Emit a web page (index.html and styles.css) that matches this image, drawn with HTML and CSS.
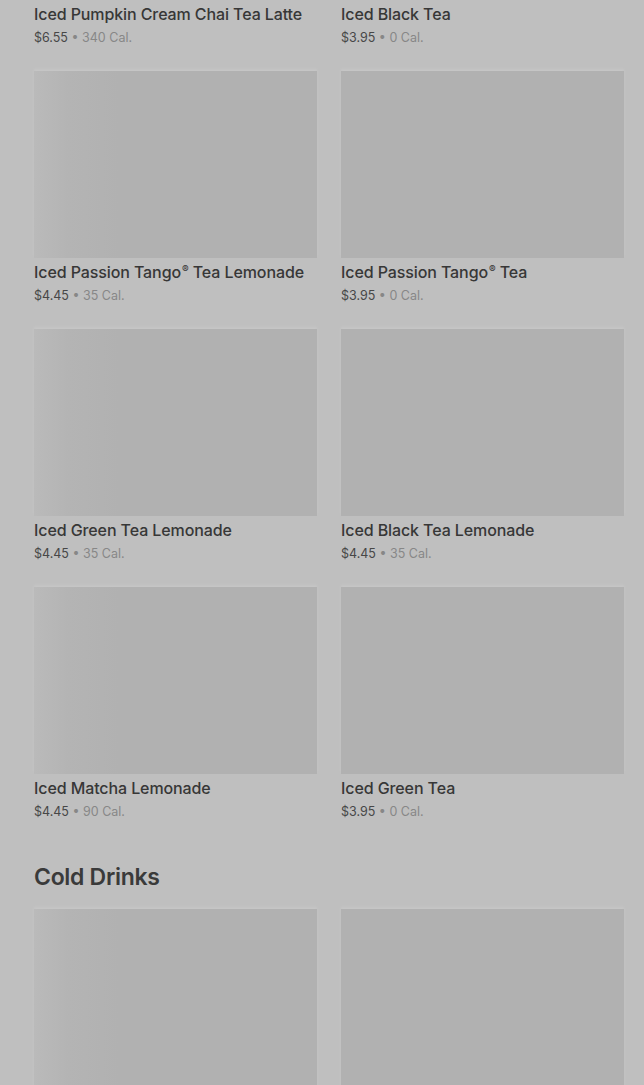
FILE: index.html
```html
<!DOCTYPE html>
<html lang="en">
<head>
    <meta charset="UTF-8">
    <meta name="viewport" content="width=device-width, initial-scale=1.0">
    <title>Menu - Iced Teas</title>
    <link rel="stylesheet" href="styles.css">
</head>
<body>
    <div class="menu">
        <!-- Iced Teas (scrolled, first row partly hidden) -->
        <section class="category scrolled">
            <div class="product-grid">
                <div class="product">
                    <div class="product-img"></div>
                    <h4 class="product-name">Iced Pumpkin Cream Chai Tea Latte</h4>
                    <p class="product-meta">$6.55 <span class="cal">• 340 Cal.</span></p>
                </div>
                <div class="product">
                    <div class="product-img"></div>
                    <h4 class="product-name">Iced Black Tea</h4>
                    <p class="product-meta">$3.95 <span class="cal">• 0 Cal.</span></p>
                </div>
                <div class="product">
                    <div class="product-img"></div>
                    <h4 class="product-name">Iced Passion Tango<span class="reg">®</span> Tea Lemonade</h4>
                    <p class="product-meta">$4.45 <span class="cal">• 35 Cal.</span></p>
                </div>
                <div class="product">
                    <div class="product-img"></div>
                    <h4 class="product-name">Iced Passion Tango<span class="reg">®</span> Tea</h4>
                    <p class="product-meta">$3.95 <span class="cal">• 0 Cal.</span></p>
                </div>
                <div class="product">
                    <div class="product-img"></div>
                    <h4 class="product-name">Iced Green Tea Lemonade</h4>
                    <p class="product-meta">$4.45 <span class="cal">• 35 Cal.</span></p>
                </div>
                <div class="product">
                    <div class="product-img"></div>
                    <h4 class="product-name">Iced Black Tea Lemonade</h4>
                    <p class="product-meta">$4.45 <span class="cal">• 35 Cal.</span></p>
                </div>
                <div class="product">
                    <div class="product-img"></div>
                    <h4 class="product-name">Iced Matcha Lemonade</h4>
                    <p class="product-meta">$4.45 <span class="cal">• 90 Cal.</span></p>
                </div>
                <div class="product">
                    <div class="product-img"></div>
                    <h4 class="product-name">Iced Green Tea</h4>
                    <p class="product-meta">$3.95 <span class="cal">• 0 Cal.</span></p>
                </div>
            </div>
        </section>

        <section class="category">
            <h2 class="category-title">Cold Drinks</h2>
            <div class="product-grid">
                <div class="product">
                    <div class="product-img"></div>
                </div>
                <div class="product">
                    <div class="product-img"></div>
                </div>
            </div>
        </section>
    </div>
</body>
</html>
```

FILE: styles.css
```css
html, body { margin: 0; padding: 0; }
body { background-color: #bfbfbf; color: #383838; font-family: Inter, "Liberation Sans", sans-serif; overflow: hidden; }
.menu { padding: 0 20px 0 34px; }
.scrolled { margin-top: -187px; }
.category { margin-bottom: 42px; }
.category-title { margin: 0 0 18px; font-size: 23px; font-weight: 600; line-height: 28px; letter-spacing: -0.3px; color: #3a3a3a; }
.product-grid { display: grid; grid-template-columns: 283px 283px; column-gap: 24px; row-gap: 24px; }
.product-img {
    height: 187px;
    background-color: #b1b1b1;
    box-shadow: 0 -2px 3px rgba(255,255,255,0.12);
}
.product:nth-child(odd) .product-img {
    background: linear-gradient(90deg, #bababa 0%, #b4b4b4 12%, #b1b1b1 30%, #b1b1b1 100%);
}
.product-name { margin: 3px 0 0; font-size: 16px; font-weight: 500; line-height: 22px; letter-spacing: -0.1px; color: #373737; }
.product-name .reg { font-size: 10px; vertical-align: 5px; line-height: 0; margin-left: 1px; }
.product-meta { margin: 4px 0 0; font-size: 12.5px; line-height: 18px; color: #474747; }
.cal { color: #878787; }
```
